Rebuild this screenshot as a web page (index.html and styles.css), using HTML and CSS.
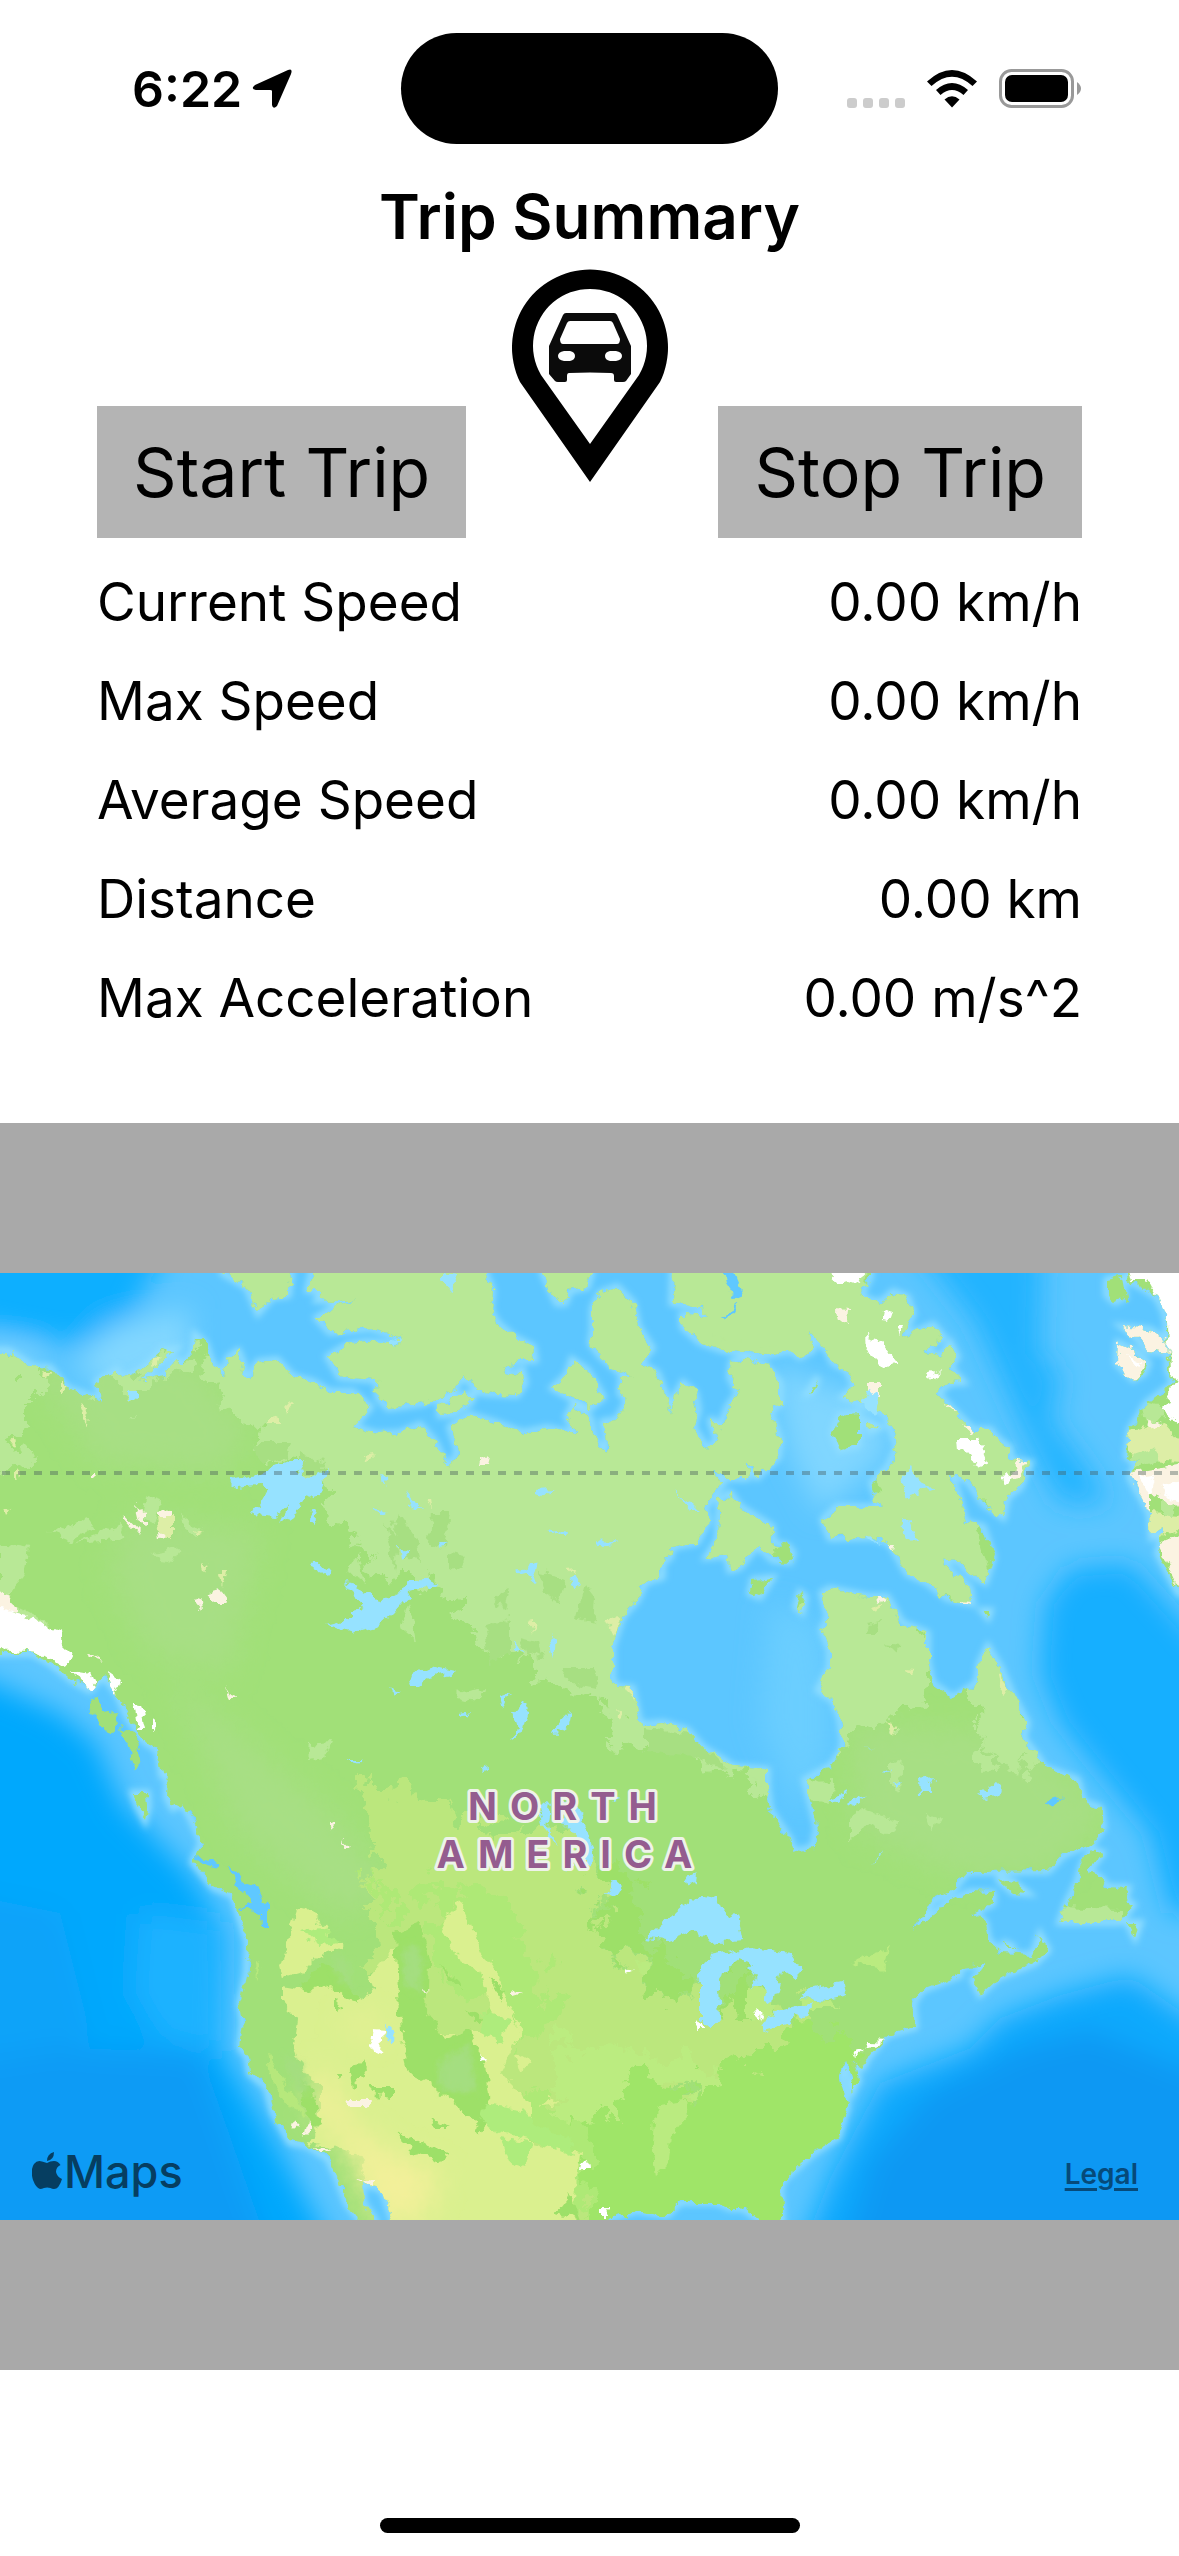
FILE: index.html
```html
<!DOCTYPE html>
<html lang="en">
<head>
<meta charset="utf-8">
<meta name="viewport" content="width=device-width, initial-scale=1">
<title>Trip Summary</title>
<link rel="stylesheet" href="styles.css">
</head>
<body>
<div class="status-bar">
  <div class="status-left">
    <span class="clock">6:22</span>
    <svg class="location-icon" viewBox="0 0 40 40" aria-hidden="true"><path d="M36 1Q41 -1 39 5L25 37Q21 41 20 36V22Q20 21 18 21H4Q-2 20 3 16Z"/></svg>
  </div>
  <div class="island"></div>
  <div class="status-right">
    <div class="signal"><span></span><span></span><span></span><span></span></div>
    <svg class="wifi-icon" viewBox="0 0 50 38" aria-hidden="true">
      <path d="M0 11.500Q25-11.500 50 11.500L45.500 16Q25-2.500 4.500 16Z"/>
      <path d="M9 20Q25 6 41 20L36.500 25Q25 15 13.500 25Z"/>
      <path d="M17.500 29.500Q25 23 32.500 29.500L25 37.500Z"/>
    </svg>
    <svg class="battery-icon" viewBox="0 0 82 39" aria-hidden="true">
      <rect x="1.500" y="1.500" width="72" height="36" rx="11" fill="none" stroke="#999" stroke-width="3"/>
      <rect x="6" y="6" width="63" height="27" rx="7"/>
      <path d="M78 13Q82 16 82 19.500T78 26Z" fill="#999"/>
    </svg>
  </div>
</div>

<main>
  <h1 class="title">Trip Summary</h1>

  <section class="controls">
    <button class="trip-button" type="button">Start Trip</button>
    <svg class="pin" viewBox="0 0 156 213" role="img" aria-label="Car location">
      <path fill-rule="evenodd" d="M78 213L8 113A78 78 0 1 1 148 113ZM78 175L127 106A57 57 0 1 0 29 106Z"/>
      <path fill="#0b0b0b" fill-rule="evenodd" d="M54 44H102Q104 44 105 46L119 77V105L114 112Q113 113 111 113H104Q102 113 102 111V107Q102 104 99 104Q78 103 57 104Q55 104 55 107V111Q55 113 53 113H46Q44 113 43 112L37 105V77L51 46Q52 44 54 44ZM58 52Q56 52 55 54L48 70Q48 75 51 75H105Q108 75 108 70L101 54Q100 52 98 52ZM52 82Q46 83 46 87T52 92H58Q63 91 63 87T58 82ZM98 82Q93 83 93 87T98 92H104Q110 91 110 87T104 82Z"/>
    </svg>
    <button class="trip-button" type="button">Stop Trip</button>
  </section>

  <table class="stats">
    <tbody>
      <tr><th scope="row">Current Speed</th><td>0.00 km/h</td></tr>
      <tr><th scope="row">Max Speed</th><td>0.00 km/h</td></tr>
      <tr><th scope="row">Average Speed</th><td>0.00 km/h</td></tr>
      <tr><th scope="row">Distance</th><td>0.00 km</td></tr>
      <tr><th scope="row">Max Acceleration</th><td>0.00 m/s^2</td></tr>
    </tbody>
  </table>

  <section class="map-panel">
    <div class="map">
      <svg class="map-canvas" viewBox="0 0 1179 947" role="img" aria-label="Map of North America">
        <defs>
          <filter id="soft" x="-20%" y="-20%" width="140%" height="140%"><feGaussianBlur stdDeviation="14"/></filter>
          <filter id="shore" x="-5%" y="-5%" width="110%" height="110%"><feGaussianBlur stdDeviation="3"/></filter>
          <filter id="rough" filterUnits="userSpaceOnUse" x="-20" y="-20" width="1219" height="987">
            <feTurbulence type="fractalNoise" baseFrequency="0.09" numOctaves="3" seed="4" result="n"/>
            <feDisplacementMap in="SourceGraphic" in2="n" scale="13" xChannelSelector="R" yChannelSelector="G"/>
          </filter>
          <filter id="ragged" filterUnits="userSpaceOnUse" x="-60" y="-60" width="1299" height="1067">
            <feTurbulence type="fractalNoise" baseFrequency="0.04" numOctaves="4" seed="9" result="n"/>
            <feDisplacementMap in="SourceGraphic" in2="n" scale="70" xChannelSelector="R" yChannelSelector="G"/>
          </filter>
          <path id="land" d="
M-20 78L8 78 33 94 50 95 67 115 87 122 103 127 97 109 117 97 122 104 135 100 150 89 163 77 175 76 160 90 140 109 162 104 177 87 182 92 193 80 195 62 205 70 212 90 223 102 228 85 238 78 244 92 242 104 250 104 258 89 277 87 293 104 313 109 330 119 353 119 370 134 353 154 377 161 400 160 420 152 435 169 448 197 458 179 450 154 470 142 493 149 523 160 547 155 577 162 567 144 573 132 590 145 595 167 605 179 607 167 603 149 617 147 628 127 620 120 622 104 633 104 618 98 600 82 591 70 593 57 593 35 600 20 617 14 633 30 638 54 652 75 640 90 657 100 665 120 670 140 677 120 683 110 695 120 698 137 693 154 707 176 717 169 710 145 720 155 728 134 738 120 730 104 732 89 743 86 765 92 780 110 780 130 770 139 780 167 778 184 757 204 748 192 747 205 730 205 713 199 723 210 705 235 708 247 697 269 672 274 670 284 662 290 662 304 645 309 637 327 622 344 612 374 612 407 617 414 632 415 640 452 663 450 687 457 703 475 723 487 733 494 767 497 767 514 770 537 790 567 793 579 813 575 817 555 812 534 805 507 832 492 842 477 843 467 840 444 833 427 818 417 830 394 830 377 822 357 828 344 822 320 830 316 850 320 870 324 887 324 902 350 927 360 927 387 932 410 953 425 977 410 980 390 988 374 1000 394 1013 424 1027 450 1023 465 1040 487 1043 494 1077 507 1083 529 1100 535 1103 555 1093 569 1063 582 1048 598 967 599 953 617 933 627 913 660 923 650 947 630 970 619 993 620 993 630 973 640 985 649 988 667 1002 680 1033 682 1040 662 1048 677 1035 690 997 705 980 721 973 707 987 690 960 694 960 702 922 717 913 730 915 754 887 762 868 784 863 794 855 789 858 807 852 819 845 789 840 804 847 834 838 864 813 880 783 907 780 914 782 967 760 947 743 935 730 935 717 929 680 929 667 942 637 937 603 947 603 967 403 967 393 947 383 917 362 909 363 930 375 947 375 967 368 967 360 947 347 930 337 904 328 885 307 872 290 869 273 839 267 814 250 800 248 784 240 774 243 750 240 730 247 700 248 670 238 637 233 622 213 614 193 589 202 570 192 547 182 530 173 535 167 524 168 499 162 502 158 477 143 467 128 444 117 420 103 402 90 417 72 407 50 390 32 380 -20 380Z
M223 -20V0L247 14 258 40 272 24 288 22 291 0V-20Z
M312 -20V0L308 17 323 17 317 27 340 28 357 24 335 34 317 45 330 59 370 55 400 64 398 72 367 69 347 72 328 84 340 104 377 107 378 124 388 135 423 130 453 119 463 102 470 110 483 120 517 122 525 110 522 97 507 104 505 94 517 87 535 87 533 74 513 64 497 50 490 37 492 17 485 0V-20Z
M440 132L462 122 474 121 470 130 452 141 440 142Z
M572 87L587 97 603 124 590 135 553 115 567 102Z
M543 -20V0L557 30 565 30 570 17 587 14 591 0V-20Z
M673 -20L673 0 672 30 700 34 707 44 682 42 683 54 700 69 723 77 767 82 790 77 800 84 813 77 810 60 827 77 833 90 847 97 855 114 843 124 877 137 887 144 897 174 888 194 872 210 880 234 837 234 823 247 830 265 873 264 890 270 907 300 927 309 947 325 972 330 970 315 953 300 940 284 957 287 970 300 985 309 993 284 983 254 965 249 957 217 950 200 967 207 983 230 1003 244 1007 224 1020 214 1030 190 1010 187 1010 175 998 167 990 157 973 157 950 134 937 120 950 110 963 109 950 94 957 84 950 70 940 84 925 77 943 64 933 52 903 64 913 40 907 24 893 19 880 30 860 24 870 4 870 -20Z
M730 220L720 227 718 267 707 284 727 282 730 297 740 294 757 272 773 287 790 289 793 280 787 273 773 270 772 254 740 234Z
M753 307L772 305 760 324 750 320Z
M840 142L858 140 858 172 840 177 833 160ZM867 149L879 154 870 158ZM800 320L805 324 802 339 796 334ZM812 119L818 104 808 120ZM983 338L990 338 988 344Z
M1107 7L1122 4 1125 24 1115 29 1107 22Z
M1123 54L1150 57 1170 70 1168 80 1147 77 1137 65ZM1118 70L1133 77 1148 90 1144 100 1133 106 1117 90Z
M1127 -20L1130 8 1145 16 1157 24 1165 40 1167 54 1168 97 1174 110 1147 130 1130 157 1127 184 1137 190 1130 204 1150 240 1152 264 1164 256 1158 280 1179 320 1200 320V-20Z
M1093 577L1102 580 1088 600 1100 604 1107 614 1128 615 1125 627 1133 632 1120 649 1060 649 1067 630 1077 610 1083 590ZM1128 650L1140 650 1135 664Z
M997 605L1013 609 1027 620 1013 619ZM1002 669L1015 675 1008 675Z
M133 520L147 520 148 534 145 547 138 534Z"/>
          <clipPath id="landClip"><use href="#land"/></clipPath>
        </defs>

        <rect width="1179" height="947" fill="#5cc6ff"/>
        <g filter="url(#soft)">
          <path fill="#0cafff" d="M-40-40H175L125 55 70 72 -40 50Z"/>
          <path fill="#82d7ff" d="M75 90L110 52 190 35 190 90 110 120ZM-20 68L40 75 40 95 -20 80Z"/>
          <path fill="#21b4ff" d="M905-40H1043L1040 80 1062 105 1050 145 1080 185 1110 230 1060 230 1020 150 975 50Z"/>
          <path fill="#12afff" d="M1040 400L1045 330 1070 295 1130 290 1220 390V640L1170 640 1150 560 1100 500 1060 450Z"/>
          <path fill="#06a8fd" d="M-40 395L60 440 96 470 122 530 190 600 228 660 224 780 285 885 335 980H-40Z"/>
          <path fill="#1bb2ff" d="M140 640L220 650 222 780 160 765 135 720Z"/>
          <path fill="#08a3f9" d="M-40 620L60 640 90 760 60 800 -40 800Z"/>
          <path fill="#0d9bf5" d="M-40 790L60 775 200 780 225 850 270 980H-40Z"/>
          <path fill="#08a9fd" d="M800 980L830 905 880 810 970 775 1000 745 1060 722 1130 703 1220 765V980Z"/>
          <path fill="#0d98f3" d="M845 980L870 890 930 820 1020 775 1090 758 1220 810V980Z"/>
          <path fill="#80d6ff" d="M770 90L880 130 890 180 820 240 790 180Z"/>
          <path fill="#6bceff" d="M770 330L820 350 830 420 830 480 800 540 760 450Z"/>
        </g>
        <g filter="url(#shore)"><use href="#land" fill="none" stroke="#90deff" stroke-width="7"/></g>

        <g filter="url(#rough)">
          <g clip-path="url(#landClip)">
            <rect x="-20" y="-20" width="1219" height="987" fill="#a1e078"/>
            <g filter="url(#soft)" fill="#a7df84">
              <path d="M30 90L190 80 250 160 220 200 100 190ZM130 240L260 260 230 400 150 380 110 300ZM170 400L330 540 400 620 340 640 240 560Z"/>
              <path d="M850 450L1020 460 1110 540 1050 600 960 600 860 560Z"/>
            </g>
            <g filter="url(#ragged)">
              <g fill="#b8e896">
                <path d="M205 -60L200 80 220 130 250 157 262 194 330 200 343 260 383 320 410 290 457 337 470 367 523 387 557 414 603 424 627 470 683 480 720 495 780 520 820 480 800 400 680 380 740 320 800 250 800 -60Z"/>
                <path d="M-60 50L31 84V150L15 200 -60 215ZM97 105L120 95 180 75 190 85 140 110 110 125Z"/>
                <path d="M815 290H930L940 380 925 420 913 437 897 447 850 468 800 440Z"/>
                <path d="M975 350L1010 370 1045 465 1030 500 990 480 970 440Z"/>
              </g>
              <path fill="#bbe77d" d="M365 510L395 515 470 545 560 560 587 580 600 627 610 670 640 700 650 720 665 735 700 720 722 745 800 725 800 790 770 800 740 820 690 810 660 830 650 850 610 1000 430 1000 380 720 372 610Z"/>
              <g fill="#aee976">
                <path d="M420 610L500 620 540 690 560 750 500 770 470 720 430 670ZM500 820L590 830 590 900 540 880 500 850ZM370 600L400 620 400 660 385 640ZM570 870L610 880 600 947 565 930Z"/>
              </g>
              <path fill="#bbec80" d="M560 770L720 790 715 830 660 800 600 850 560 840Z"/>
              <path fill="#9de067" d="M590 600L620 590 650 690 680 690 690 720 670 735 655 730 640 690 600 665 605 630ZM720 745L720 705 742 688 755 705 750 740Z"/>
              <path fill="#9fe568" d="M620 840L625 805 650 800 680 820 710 825 715 790 765 795 800 745 860 770 900 1000 600 1000 580 860 590 830Z"/>
            </g>
            <path fill="#b8e896" d="M673 -20H870L865 20 910 20 960 60 965 110 940 120 1000 160 1035 190 1005 250 965 210 990 300 970 335 880 290 820 270 820 230 880 220 860 140 780 75 673 60Z"/>
            <g fill="#b8e896">
              <path d="M750 500L790 490 820 510 800 540 765 520ZM850 545L862 535 900 550 890 562 865 550 850 570Z"/>
              <path d="M50 260L90 245 95 252 70 268ZM75 270L120 252 128 265 90 268ZM0 270L30 275 25 300 0 330ZM0 325L40 345 50 355 30 360ZM145 225L160 230 155 250 142 245ZM150 280L180 275 175 290 160 288ZM180 240L200 255 195 265 182 255ZM310 470L333 468 325 485 308 487ZM355 285L365 310 345 300ZM410 330L418 370 400 355ZM455 420L485 415 480 430 460 425ZM1060 634L1122 636 1122 652 1062 652ZM890 490L903 485 900 520 890 515ZM925 540L942 548 930 556Z"/>
              <path d="M982 467L1010 460 1022 478 1018 505 1000 485 985 478ZM780 510L835 508 830 528 790 520Z"/>
            </g>
            <g fill="#a7df82">
              <path d="M398 240L415 265 420 290 402 280 392 255ZM432 240L450 240 445 275 430 270ZM450 280L465 283 460 298 450 295ZM495 325L510 315 505 340ZM540 300L565 305 560 330 545 320ZM585 310L597 325 595 350 575 345ZM560 395L595 395 597 415 570 410ZM485 355L510 345 510 380 490 390ZM520 365L540 370 545 385 525 380ZM385 250L400 270 395 300ZM870 350L880 348 878 358 868 358ZM885 370L898 372 895 380ZM250 170H290L285 185 262 190ZM300 180L325 190 320 205 300 200ZM645 455L690 460 725 495 695 485 645 480Z"/>
            </g>
            <g fill="#daf08f">
              <path d="M297 635L315 640 330 665 342 675 315 685 300 700 283 705 280 692 288 665ZM283 712L300 715 330 710 345 720 355 725 375 720 372 700 390 680 405 670 420 740 440 760 500 760 480 700 460 690 440 650 460 630 472 655 482 680 500 705 520 760 500 800 530 830 530 870 580 880 570 967 380 967 360 880 310 870 320 850 320 810 305 800 293 770 296 745 283 730Z"/>
              <path d="M515 740L523 755 520 765ZM515 780L532 790 520 800ZM545 825L562 830 540 832Z"/>
            </g>
            <g filter="url(#soft)" fill="#f3f09a"><path d="M320 790L350 850 390 880 440 900 420 950 380 947 345 870 310 830ZM340 745L380 750 370 765Z"/></g>
            <g fill="#9de067">
              <path d="M300 710L325 690 340 700 360 730 345 725 330 712 310 718ZM395 660L420 650 430 690 428 740 445 765 470 755 485 790 490 830 480 860 465 840 430 810 410 800 400 760ZM440 690L460 710 462 718 445 700ZM490 705L505 715 500 730ZM335 728L342 735 335 740ZM335 800L343 800 338 808ZM350 800L362 785 368 795 352 815ZM368 815L395 815 395 825 375 823ZM395 855L420 870 450 880 440 890 410 878ZM430 845L440 850 450 855 435 855ZM555 940L570 920 580 947ZM465 735L480 742 478 750ZM300 805L310 815 322 850 312 855 302 830ZM405 765L440 775 430 790 408 785Z"/>
            </g>
            <g fill="#aeec7c"><path d="M485 830L520 835 535 850 570 865 575 885 540 870 500 860 480 850ZM500 865L530 870 525 895 510 890ZM480 740L510 745 500 770 482 760ZM300 660L320 655 340 670 320 672Z"/></g>
            <g filter="url(#shore)" fill="#a4de80"><path d="M335 680L350 690 350 715 335 700ZM405 670L422 680 420 720 405 715ZM440 790L470 770 475 820 440 815ZM285 780L300 790 310 825 292 810Z"/></g>
            <path fill="#b6e87b" d="M267 780L285 810 308 845 290 835 270 805ZM257 688L262 690 258 708Z"/>
            <path fill="#baeb80" d="M660 832L686 828 688 842 672 860 670 890 655 905 652 880 655 850ZM850 690L890 675 885 697 865 693ZM800 725L830 728 840 735 805 735ZM635 690L650 688 648 703 640 703ZM745 715L775 720 775 745 745 745Z"/>
            <g fill="#ddeea6">
              <path d="M42 98H50L48 106ZM58 110L66 114 58 121ZM78 130L88 135 87 152ZM152 85L158 86 155 93ZM285 128L295 130 287 140ZM268 146L281 143 281 151 268 151ZM157 243H174V265H160ZM195 257L202 260 196 262ZM10 165L19 168 16 173ZM2 235L11 236 5 243ZM15 195L22 203 15 205ZM204 291L211 293 206 297ZM218 300L225 300 222 312ZM362 182L375 180 365 190ZM423 228L430 227 431 234ZM568 298L576 297 575 303ZM529 347L534 346 535 360ZM606 347L620 346 614 364ZM627 416L633 415 634 428ZM617 437L622 440 620 446ZM657 99L663 98 663 106ZM870 336L882 332 875 342ZM907 396L917 397 910 404ZM886 449L898 452 896 462ZM998 400L1010 415 1003 420ZM1120 160L1165 150 1200 190 1135 186ZM1150 240L1200 245 1150 270Z"/>
            </g>
            <path fill="#b8e896" d="M1140 128L1165 134 1165 145 1145 148ZM1130 184L1155 175 1160 188 1135 195ZM1160 225L1175 230 1175 245 1160 240Z"/>
            <g fill="#fbf3e2">
              <path d="M135 232L145 240 145 252 139 248ZM123 240L142 260 138 261 125 246ZM158 237L172 238 172 244H158ZM157 258L165 263 158 268ZM193 325L201 328 202 336ZM208 322L222 318 231 330 218 330ZM226 412L235 428 230 428ZM88 378L103 388 90 384ZM329 548L334 553 331 558ZM341 565L352 575 347 576ZM96 197L99 202 96 203ZM480 187L490 184 488 192 479 192ZM0 318L8 320 20 340 -20 335ZM836 37L849 38 848 54 838 50ZM868 110H881V126H868ZM943 131L958 136 955 141ZM963 150L975 157 970 159ZM1020 187L1026 186 1020 205 1008 207ZM962 327L973 328 971 334ZM903 256L914 258 908 262ZM889 269L896 269 893 278ZM876 322L885 326 878 330ZM1118 50L1150 57 1172 70 1168 80 1147 77ZM1115 65L1133 77 1148 90 1133 106 1112 90ZM1127 200L1182 190V235L1150 220 1150 245ZM1158 270L1185 260V330ZM1145 145L1160 150 1155 157ZM347 827L371 827 368 834 350 834ZM290 850L300 852 295 856ZM308 850L313 855 305 863ZM315 874L332 876 320 880ZM355 905L375 907 370 912ZM509 715L522 720 512 723ZM420 715L432 717 425 718Z"/>
            </g>
            <g fill="#fff">
              <path d="M-20 327L15 340 35 345 48 355 60 360 62 372 72 382 66 395 40 380 -20 376ZM72 397L90 400 95 412 88 420ZM108 398L122 408 117 420 110 415ZM133 430L140 430 145 455 137 455ZM152 445L158 453 152 458ZM829 -20H870L862 12 850 8 840 10 829 0ZM882 37L893 40 890 48 881 47ZM897 52L903 52 900 64ZM865 63L878 67 898 93 885 94 866 75ZM928 100L939 96 932 106ZM957 165L978 165 988 190 978 194 970 180 958 178ZM1004 200L1012 205 1005 210ZM1127 -20L1133 8 1145 8 1157 24 1168 50 1170 97 1176 110 1162 135 1180 150 1200 150V-20ZM1128 84L1142 90 1135 93ZM1137 205L1155 203 1150 222ZM1160 212L1200 205V235L1165 222ZM372 757L384 758 382 780 374 778 370 770ZM697 745L705 755 695 755ZM626 692L633 696 628 698ZM755 735L765 742 757 747ZM482 782L487 788 483 790ZM868 767L887 768 868 773 855 785 852 779 866 775ZM581 891L587 888 588 897 580 897ZM602 935L608 935 610 942 602 942Z"/>
            </g>
          </g>

          <g fill="#96e2ff">
            <path d="M230 207L257 202 293 187 307 187 297 204 310 205 327 197 320 220 300 227 302 235 280 250 290 230 277 244 253 242 267 217 260 212 233 214Z"/>
            <path d="M345 310L355 312 370 320 380 330 400 320 407 307 423 305 437 312 410 320 390 342 377 354 353 360 327 351 350 345 350 337 362 334Z"/>
            <path d="M408 414L413 400 430 392 457 398 430 404 418 414ZM510 467L518 454 513 440 522 429 528 435 522 460ZM500 424L512 420 506 427 503 435ZM552 459L570 439 567 454 556 461ZM518 299L538 289 533 310ZM570 305L580 308 577 318ZM549 373L556 362 555 375 552 388ZM514 368L524 380 515 376ZM550 256L568 260 565 265ZM597 267L618 271 600 274ZM534 218L554 217 545 222ZM674 218L700 236 690 236ZM404 217L422 238 412 236ZM400 275L410 276 402 284ZM437 268L446 272 438 274ZM313 288L331 298 328 302 312 296ZM312 238L318 240 317 252 311 247ZM372 234L386 238 384 242ZM382 200L388 205 384 212ZM390 414L399 418 396 423ZM445 10V0L457 2 450 18ZM390 62L402 68 390 72ZM128 118L140 118 140 125 128 124ZM347 488H361L355 492ZM482 495L490 494 485 502ZM460 442L472 440 462 446Z"/>
            <path d="M538 530L550 532 547 554 558 574 547 564ZM560 522L577 534 587 557 594 580 590 594 584 585 577 567 563 550ZM565 585L573 590 567 599ZM605 622L613 607 622 615 617 623ZM685 605L697 600 696 612 688 613ZM610 525L622 527 612 529Z"/>
            <path d="M645 665L667 647 693 624 718 627 723 639 737 644 742 667 712 670 693 659 667 667Z"/>
            <path d="M697 702L710 682 750 674 790 680 801 697 797 704 782 698 775 727 768 729 763 714 750 717 757 704 742 685 723 700 718 717 720 744 710 755 700 747 700 710Z"/>
            <path d="M757 750L780 739 813 730 807 742 780 753 765 757ZM800 725L810 717 845 709 847 722 827 727Z"/>
            <path d="M828 526L845 520 840 530ZM847 530L868 523 855 533ZM919 506L935 504 930 512 930 520 920 520ZM978 520L998 509 1003 522 985 526ZM893 508L902 510 895 516ZM880 499L895 495 885 500ZM863 470L875 476 868 472ZM872 590L886 577 880 585ZM900 205L912 195 918 208 933 215 910 222 908 228ZM900 246L910 250 918 267 905 268ZM862 125L880 115 876 140 865 135ZM384 752L395 757 394 770 386 765ZM866 265L870 262 880 270Z"/>
          </g>
          <g fill="#5fc8ff">
            <path d="M196 581L218 590 216 593 198 588ZM230 595L236 598 243 610 255 612 262 625 268 630 268 655 262 655 261 640 240 636 254 630 245 620 232 607ZM1045 529L1060 525 1063 520 1058 530 1048 534ZM718 -20L725 10 735 25 742 22 735 5 727 -20ZM720 45L740 30 735 40Z"/>
          </g>
          <path fill="#a1e078" d="M88 425L98 424 105 440 115 438 118 450 110 462 98 450ZM120 455L135 460 140 485 135 498 128 470Z"/>
        </g>
        <line x1="2" y1="200" x2="1179" y2="200" class="arctic-circle"/>
        <text class="region-label" x="569" y="547">NORTH</text>
        <text class="region-label" x="571" y="595">AMERICA</text>
      </svg>
      <div class="map-brand">
        <svg class="apple-icon" viewBox="0 0 30 37" aria-hidden="true">
          <path d="M22 0Q22 8 15 9Q15 2 22 0ZM15 11Q18 9 22 9Q26 9 28.500 13Q24 15 24 20Q25 25 30 27Q27 37 22 37Q20 37 18.500 36Q15 35 12 36Q10 37 8 37Q4 36 1 28Q-2 18 2 12Q5 8 10 9.500Z"/>
        </svg>
        <span>Maps</span>
      </div>
      <a class="legal" href="#legal">Legal</a>
    </div>
  </section>
</main>
<div class="home-indicator"></div>
</body>
</html>
```

FILE: styles.css
```css
* {
  box-sizing: border-box;
}

body {
  margin: 0;
  min-height: 100vh;
  display: flex;
  flex-direction: column;
  background: #fff;
  color: #000;
  font-family: Inter, "Liberation Sans", sans-serif;
}

.status-bar {
  display: grid;
  grid-template-columns: 1fr 377px 1fr;
  align-items: center;
  padding: 33px 98px 0;
}

.island {
  height: 111px;
  border-radius: 56px;
  background: #000;
}

.status-left,
.status-right {
  display: flex;
  align-items: center;
}

.status-left {
  gap: 10px;
  padding-left: 34px;
}

.clock {
  font-size: 50px;
  line-height: 60px;
  font-weight: 600;
}

.location-icon {
  width: 40px;
  height: 40px;
}

.status-right {
  justify-content: flex-end;
  gap: 22px;
}

.signal {
  display: flex;
  gap: 6px;
  align-self: flex-end;
}

.signal span {
  width: 10px;
  height: 10px;
  border-radius: 3px;
  background: #ccc;
}

.wifi-icon {
  width: 50px;
  height: 38px;
}

.battery-icon {
  width: 82px;
  height: 39px;
}

.title {
  margin: 33px 0 12px;
  font-size: 62px;
  line-height: 80px;
  font-weight: 600;
  text-align: center;
}

.controls {
  display: grid;
  grid-template-columns: 1fr auto 1fr;
  padding: 0 97px;
}

.pin {
  width: 156px;
  height: 213px;
  margin-bottom: 56px;
}

.trip-button {
  align-self: end;
  justify-self: start;
  padding: 22px 36px;
  border: 0;
  background: #b4b4b4;
  color: #000;
  font: inherit;
  font-size: 68px;
  line-height: 88px;
  white-space: nowrap;
}

.trip-button:last-child {
  justify-self: end;
}

.stats {
  width: calc(100% - 194px);
  margin: 15px 97px 75px;
  border-collapse: collapse;
  font-size: 53px;
  line-height: 99px;
}

.stats th,
.stats td {
  padding: 0;
  font-weight: 400;
  text-align: left;
}

.stats td {
  text-align: right;
}

.map-panel {
  padding: 150px 0;
  background: #a9a9a9;
}

.map {
  position: relative;
}

.map-canvas {
  display: block;
  width: 100%;
  height: auto;
}

.arctic-circle {
  stroke: #465a5a;
  stroke-opacity: 0.4;
  stroke-width: 4;
  stroke-dasharray: 8 8;
}

.region-label {
  fill: #945c8f;
  stroke: #eef3ea;
  stroke-width: 6px;
  stroke-linejoin: round;
  paint-order: stroke;
  font-size: 38px;
  font-weight: 700;
  letter-spacing: 13px;
  text-anchor: middle;
}

.map-brand {
  position: absolute;
  left: 32px;
  bottom: 18px;
  display: flex;
  align-items: center;
  gap: 2px;
  color: #063e61;
  font-size: 45px;
  line-height: 60px;
  font-weight: 500;
}

.apple-icon {
  width: 30px;
  height: 37px;
  fill: #063e61;
  margin-bottom: 4px;
}

.legal {
  position: absolute;
  right: 41px;
  bottom: 28px;
  color: #064a7a;
  font-size: 28px;
  line-height: 36px;
  font-weight: 600;
  text-decoration-thickness: 3px;
  text-underline-offset: 4px;
}

.home-indicator {
  width: 420px;
  height: 15px;
  margin: auto auto 23px;
  border-radius: 8px;
  background: #000;
}
```
